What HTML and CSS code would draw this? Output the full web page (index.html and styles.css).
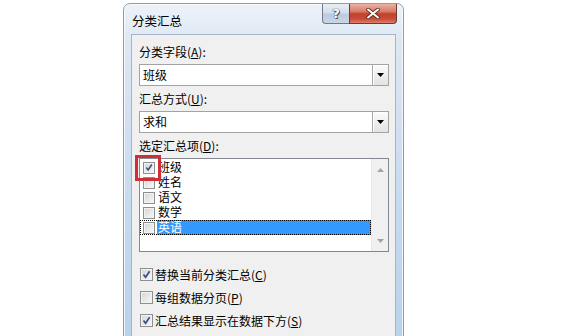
FILE: index.html
```html
<!DOCTYPE html>
<html lang="zh-CN">
<head>
<meta charset="utf-8">
<title>分类汇总</title>
<link rel="stylesheet" href="styles.css">
</head>
<body>
<div class="window">
  <div class="titlebar">
    <span class="title">分类汇总</span>
    <div class="caption">
      <div class="cap-btn help">?</div>
      <div class="cap-btn close">
        <svg width="14" height="11" viewBox="0 0 14 11"><path d="M2 1.5 L12 9.5 M12 1.5 L2 9.5" stroke="#5a2a22" stroke-width="3.6" stroke-linecap="round"/><path d="M2 1.5 L12 9.5 M12 1.5 L2 9.5" stroke="#fff" stroke-width="2" stroke-linecap="round"/></svg>
      </div>
    </div>
  </div>
  <div class="client">
    <div class="label">分类字段(<u>A</u>):</div>
    <div class="combo">
      <span class="combo-text">班级</span>
      <div class="drop"><svg width="7" height="4" viewBox="0 0 7 4"><polygon points="0,0 7,0 3.5,4" fill="#000"/></svg></div>
    </div>
    <div class="label">汇总方式(<u>U</u>):</div>
    <div class="combo">
      <span class="combo-text">求和</span>
      <div class="drop"><svg width="7" height="4" viewBox="0 0 7 4"><polygon points="0,0 7,0 3.5,4" fill="#000"/></svg></div>
    </div>
    <div class="label">选定汇总项(<u>D</u>):</div>
    <div class="list">
      <div class="items">
        <div class="item"><span class="cb checked"><svg width="11" height="11" viewBox="0 0 11 11"><path d="M2.5 5.5 L4.6 8.2 L8.6 2.2" fill="none" stroke="#3b4f86" stroke-width="1.7"/></svg></span><span class="txt">班级</span></div>
        <div class="item"><span class="cb"></span><span class="txt">姓名</span></div>
        <div class="item"><span class="cb"></span><span class="txt">语文</span></div>
        <div class="item"><span class="cb"></span><span class="txt">数学</span></div>
        <div class="item focus"><span class="cb"></span><span class="txt sel">英语</span></div>
      </div>
      <div class="vscroll">
        <svg width="7" height="4" viewBox="0 0 7 4"><polygon points="0,4 7,4 3.5,0" fill="#a3a3a3"/></svg>
        <svg width="7" height="4" viewBox="0 0 7 4"><polygon points="0,0 7,0 3.5,4" fill="#a3a3a3"/></svg>
      </div>
      <div class="marker"></div>
    </div>
    <div class="options">
      <div class="opt"><span class="cb checked"><svg width="11" height="11" viewBox="0 0 11 11"><path d="M2.5 5.5 L4.6 8.2 L8.6 2.2" fill="none" stroke="#3b4f86" stroke-width="1.7"/></svg></span><span>替换当前分类汇总(<u>C</u>)</span></div>
      <div class="opt"><span class="cb"></span><span>每组数据分页(<u>P</u>)</span></div>
      <div class="opt"><span class="cb checked"><svg width="11" height="11" viewBox="0 0 11 11"><path d="M2.5 5.5 L4.6 8.2 L8.6 2.2" fill="none" stroke="#3b4f86" stroke-width="1.7"/></svg></span><span>汇总结果显示在数据下方(<u>S</u>)</span></div>
    </div>
  </div>
</div>
</body>
</html>
```

FILE: styles.css
```css
* {
  box-sizing: border-box;
}

html,
body {
  margin: 0;
  padding: 0;
  background: #ffffff;
  overflow: hidden;
}

body {
  width: 563px;
  height: 336px;
  font-family: "Noto Sans CJK SC", "Noto Sans", sans-serif;
  font-size: 12px;
  color: #000;
}

u {
  text-decoration: underline;
  text-underline-offset: 1px;
}

.window {
  margin: 3px 0 0 123px;
  width: 281px;
  height: 345px;
  border: 1px solid #8e9bab;
  border-radius: 7px 7px 0 0;
  background: linear-gradient(#edf2f8 0%, #dbe7f4 12%, #c6daef 60%, #b9d1eb 100%);
  box-shadow: inset 0 0 0 1px rgba(255, 255, 255, 0.75);
  padding: 0 7px;
}

.titlebar {
  height: 30px;
  display: flex;
  justify-content: space-between;
  align-items: flex-start;
}

.title {
  padding: 9px 0 0 1px;
  line-height: 16px;
  font-size: 12.5px;
  color: #000;
}

.caption {
  display: flex;
  margin-right: -1px;
}

.cap-btn {
  height: 20px;
  display: flex;
  align-items: center;
  justify-content: center;
}

.help {
  width: 27px;
  border: 1px solid #6f7b8c;
  border-top: none;
  border-right: none;
  border-radius: 0 0 0 4px;
  background: linear-gradient(#e8eef6 0%, #d3deeb 45%, #bccbdd 55%, #c9d6e6 100%);
  color: #fff;
  font-family: "DejaVu Sans", sans-serif;
  font-weight: bold;
  font-size: 13px;
  text-shadow: 0 0 1px #3a4a5e, 0 0 1px #3a4a5e, 1px 1px 0 #4a5a70;
}

.close {
  width: 48px;
  border: 1px solid #6b3b34;
  border-top: none;
  border-radius: 0 0 4px 0;
  background: linear-gradient(#eab3a6 0%, #d77a66 40%, #c2412b 52%, #c84d37 80%, #dd806a 100%);
}

.client {
  height: 320px;
  border: 1px solid #a5b4c6;
  background: #f0f0f0;
  padding: 9px 6px 0 7px;
}

.label {
  height: 16px;
  line-height: 16px;
  margin-bottom: 4px;
}

.combo {
  height: 22px;
  border: 1px solid #a3a3a3;
  background: #fff;
  display: flex;
  align-items: stretch;
  margin-bottom: 5px;
}

.combo-text {
  flex: 1;
  padding-left: 3px;
  line-height: 20px;
}

.drop {
  width: 16px;
  border-left: 1px solid #a8a8a8;
  background: linear-gradient(#fbfbfb, #e3e3e3);
  box-shadow: inset 1px 1px 0 #ffffff;
  display: flex;
  align-items: center;
  justify-content: center;
}

.list {
  position: relative;
  height: 94px;
  border: 1px solid #828790;
  background: #fff;
  display: flex;
}

.items {
  flex: 1;
  padding-top: 1px;
}

.item {
  height: 15px;
  display: flex;
  align-items: center;
  padding-left: 3px;
}

.item .cb {
  width: 12px;
  height: 12px;
  margin-right: 2px;
}

.item .txt {
  flex: 1;
  height: 15px;
  padding: 1px 0 0 1px;
  line-height: 14px;
  font-family: "Liberation Sans", "Noto Sans CJK SC", sans-serif;
}

.item.focus {
  outline: 1px dotted #000;
  outline-offset: -1px;
}

.txt.sel {
  background: #3399ff;
  color: #fff;
}

.vscroll {
  width: 17px;
  background: #f0f0f0;
  border-left: 1px solid #e8e8e8;
  display: flex;
  flex-direction: column;
  justify-content: space-between;
  align-items: center;
  padding: 9px 0 8px;
}

.marker {
  position: absolute;
  left: -5px;
  top: -4px;
  width: 26px;
  height: 26px;
  border: 3px solid #cf2d38;
}

.cb {
  width: 13px;
  height: 13px;
  border: 1px solid #8e8f8f;
  background: linear-gradient(135deg, #d4d4d4, #f9f9f9);
  box-shadow: inset 0 0 0 1px #f3f3f3;
  display: flex;
  align-items: center;
  justify-content: center;
  flex: none;
}

.options {
  margin-top: 11px;
}

.opt {
  height: 23px;
  display: flex;
  align-items: center;
}

.opt .cb {
  margin-left: 1px;
  margin-right: 2px;
}
```
